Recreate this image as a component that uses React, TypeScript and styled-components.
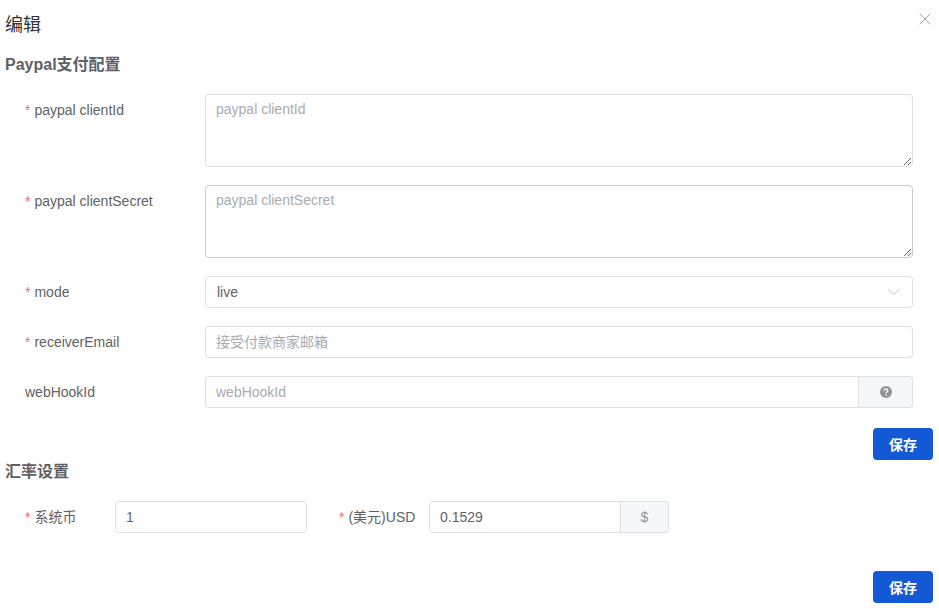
import styled, { createGlobalStyle } from 'styled-components';
import { ChevronDown, X } from 'lucide-react';

const FONT = `"Liberation Sans", "Noto Sans CJK SC", sans-serif`;

const GlobalStyle = createGlobalStyle`
  html, body {
    margin: 0;
    padding: 0;
    background: #fff;
    font-family: ${FONT};
  }
  * {
    box-sizing: border-box;
  }
`;

const Dialog = styled.div`
  position: relative;
  width: 939px;
  height: 609px;
  overflow: hidden;
  padding: 13px 6px 0 5px;
  color: #606266;
`;

const Title = styled.div`
  font-size: 18px;
  line-height: 24px;
  color: #303133;
  margin-bottom: 16px;
`;

const CloseButton = styled.div`
  position: absolute;
  top: 9px;
  right: 4px;
  color: #909399;
  display: flex;
`;

const SectionTitle = styled.div`
  font-size: 16px;
  font-weight: 700;
  line-height: 24px;
  color: #5f6166;
`;

const Form = styled.div`
  padding: 17px 20px 0 20px;
  display: flex;
  flex-direction: column;
  gap: 18px;
`;

const Row = styled.div`
  display: flex;
  align-items: flex-start;
`;

const Label = styled.label<{ $width?: number }>`
  width: ${(p) => p.$width ?? 180}px;
  flex-shrink: 0;
  font-size: 14px;
  line-height: 32px;
  color: #606266;
`;

const Star = styled.span`
  color: #f56c6c;
  margin-right: 4px;
`;

const TextArea = styled.textarea<{ $hover?: boolean }>`
  display: block;
  flex: 1;
  height: 73px;
  padding: 4px 10px;
  border: 1px solid ${(p) => (p.$hover ? '#c8cad3' : '#dfe0e8')};
  border-radius: 4px;
  font-family: ${FONT};
  font-size: 14px;
  line-height: 20px;
  color: #606266;
  outline: none;
  resize: vertical;
  &::placeholder {
    color: #a8abb2;
  }
`;

const Input = styled.input<{ $joined?: boolean }>`
  flex: 1;
  min-width: 0;
  height: 32px;
  padding: 0 10px;
  border: 1px solid #dfe0e8;
  border-radius: ${(p) => (p.$joined ? '4px 0 0 4px' : '4px')};
  font-family: ${FONT};
  font-size: 14px;
  color: #606266;
  outline: none;
  &::placeholder {
    color: #a8abb2;
  }
`;

const Select = styled.div`
  flex: 1;
  height: 32px;
  padding: 0 8px 0 11px;
  border: 1px solid #dfe0e8;
  border-radius: 4px;
  font-size: 14px;
  color: #606266;
  display: flex;
  align-items: center;
  justify-content: space-between;
  svg {
    color: #b4b7bd;
  }
`;

const InputGroup = styled.div<{ $width?: number }>`
  display: flex;
  flex: ${(p) => (p.$width ? 'none' : '1')};
  width: ${(p) => (p.$width ? `${p.$width}px` : 'auto')};
`;

const Append = styled.div<{ $width: number }>`
  width: ${(p) => p.$width}px;
  height: 32px;
  flex-shrink: 0;
  display: flex;
  align-items: center;
  justify-content: center;
  background: #f5f7fa;
  border: 1px solid #dfe0e8;
  border-left: 0;
  border-radius: 0 4px 4px 0;
  font-size: 14px;
  color: #909399;
`;

const Actions = styled.div<{ $top: number }>`
  display: flex;
  justify-content: flex-end;
  margin-top: ${(p) => p.$top}px;
`;

const SaveButton = styled.button`
  width: 60px;
  height: 32px;
  border: 0;
  border-radius: 4px;
  background: #1359d6;
  color: #fff;
  font-family: ${FONT};
  font-size: 14px;
  font-weight: 700;
  padding: 0;
`;

const InlineRow = styled(Row)`
  padding: 17px 0 0 20px;
`;

const InlineItem = styled.div<{ $gap?: number }>`
  display: flex;
  margin-right: ${(p) => p.$gap ?? 0}px;
`;

const HelpIcon = () => (
  <svg width="14" height="14" viewBox="0 0 14 14">
    <circle cx="7" cy="7" r="6" fill="#909399" />
    <path
      d="M5.2 5.6a1.8 1.8 0 0 1 3.6 0c0 1.3-1.8 1.3-1.8 2.7"
      fill="none"
      stroke="#fff"
      strokeWidth="1.3"
    />
    <circle cx="7" cy="10.1" r="0.8" fill="#fff" />
  </svg>
);

export default function App() {
  return (
    <>
      <GlobalStyle />
      <Dialog>
        <Title>编辑</Title>
        <CloseButton>
          <X size={20} strokeWidth={1} />
        </CloseButton>
        <SectionTitle>Paypal支付配置</SectionTitle>
        <Form>
          <Row>
            <Label>
              <Star>*</Star>paypal clientId
            </Label>
            <TextArea placeholder="paypal clientId" />
          </Row>
          <Row>
            <Label>
              <Star>*</Star>paypal clientSecret
            </Label>
            <TextArea $hover placeholder="paypal clientSecret" />
          </Row>
          <Row>
            <Label>
              <Star>*</Star>mode
            </Label>
            <Select>
              live
              <ChevronDown size={20} strokeWidth={1} />
            </Select>
          </Row>
          <Row>
            <Label>
              <Star>*</Star>receiverEmail
            </Label>
            <Input placeholder="接受付款商家邮箱" />
          </Row>
          <Row>
            <Label>webHookId</Label>
            <InputGroup>
              <Input $joined placeholder="webHookId" />
              <Append $width={54}>
                <HelpIcon />
              </Append>
            </InputGroup>
          </Row>
        </Form>
        <Actions $top={20}>
          <SaveButton>保存</SaveButton>
        </Actions>
        <SectionTitle>汇率设置</SectionTitle>
        <InlineRow>
          <InlineItem $gap={32}>
            <Label $width={90}>
              <Star>*</Star>系统币
            </Label>
            <InputGroup $width={192}>
              <Input defaultValue="1" />
            </InputGroup>
          </InlineItem>
          <InlineItem>
            <Label $width={90}>
              <Star>*</Star>(美元)USD
            </Label>
            <InputGroup $width={240}>
              <Input $joined defaultValue="0.1529" />
              <Append $width={48}>$</Append>
            </InputGroup>
          </InlineItem>
        </InlineRow>
        <Actions $top={38}>
          <SaveButton>保存</SaveButton>
        </Actions>
      </Dialog>
    </>
  );
}
